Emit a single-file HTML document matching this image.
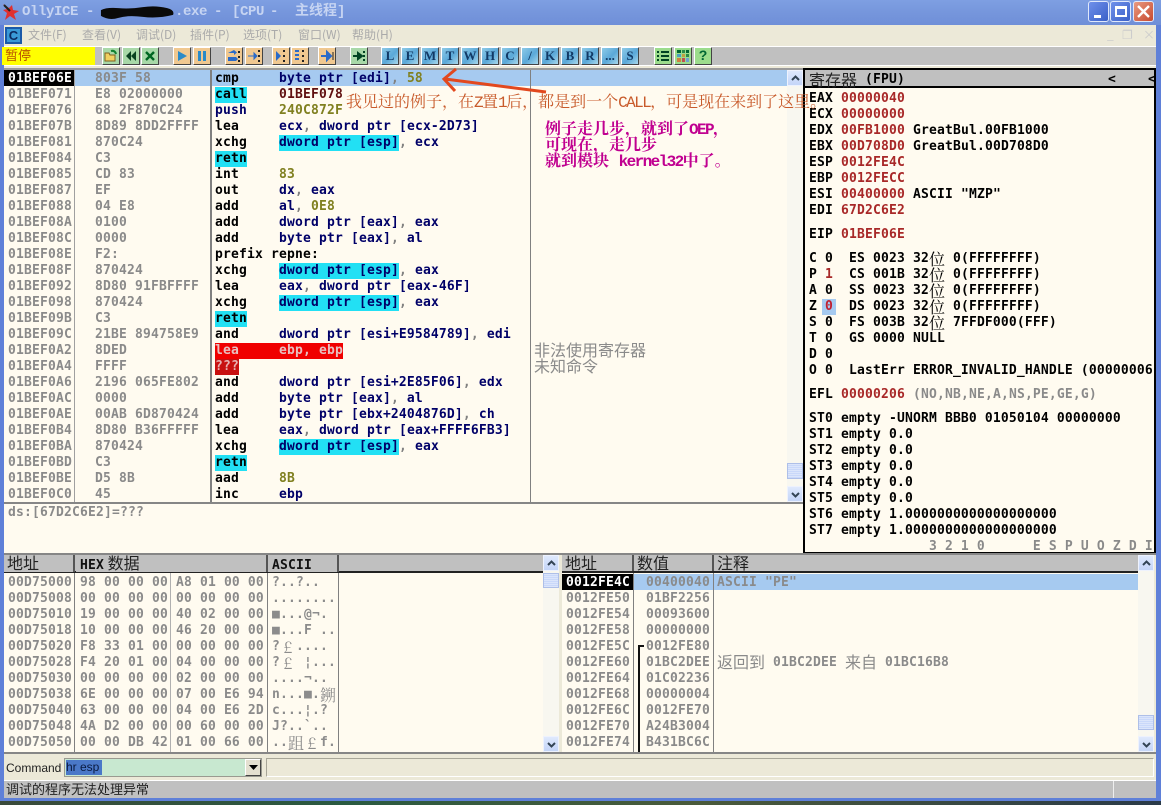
<!DOCTYPE html>
<html lang="zh"><head><meta charset="utf-8"><title>OllyICE</title>
<style>
html,body{margin:0;padding:0;width:1161px;height:805px;overflow:hidden;background:#ece9d8}
div{position:absolute;box-sizing:border-box}
pre{position:absolute;margin:0;font:bold 13px/16px "DejaVu Sans Mono","Noto Sans CJK SC",monospace;letter-spacing:.17px;color:#000;white-space:pre}
.g{color:#8a8a8a}.n{color:#000068}.o{color:#808020}.m{color:#601010}.r{color:#a82828}
i{font-style:normal;color:#808080}
.cy{background:#22e0f4;display:inline-block;height:16px;vertical-align:top}
.c{display:inline-block;width:16px;height:16px;line-height:16px;vertical-align:top;font:400 16px/16px "Noto Serif CJK SC",serif;letter-spacing:0;text-align:center}
.s{font-family:"Noto Sans CJK SC",sans-serif;position:relative;top:-2px}
.hd{background:#c0c0c0;height:17px;font:400 16px/15px "Noto Sans CJK SC",sans-serif;color:#222;white-space:pre;border-right:2px solid #555;padding-left:3px}
.hd span{font:bold 13px/16px "DejaVu Sans Mono",monospace;letter-spacing:.17px;color:#111;margin-left:1px}
.bt{width:18px;height:18px;top:47px;border:1px solid;border-color:#fff #444 #444 #fff;text-align:center;font:bold 13px/15px "Liberation Serif",serif;color:#123a66;overflow:hidden}
.l{background:linear-gradient(135deg,#8ecbe8,#5aa8d8 55%,#a8d8ec)}
.a{background:#f0c890}.e{background:#a8d8a8}
.bt svg{position:absolute;left:0;top:0;width:16px;height:16px}
.sb{background:#f8f7f0}
.sbb{left:0;width:100%;height:16px;background:linear-gradient(#dfe9fd,#c4d5f8);border:1px solid #eef2fd;color:#3a5a9a}
.sbb svg{position:absolute;left:3px;top:4px;width:9px;height:7px}
.th{left:0;width:100%;background:repeating-linear-gradient(#dbe5fb 0 1px,#c9d8fa 1px 2px);border:1px solid #aebfe8}
.mn{font:400 12px/20px "Noto Sans CJK SC",sans-serif;color:#aaa;top:25px;white-space:pre}
.t{top:1px;font:bold 14px/22px "Liberation Mono","Noto Sans CJK SC",monospace;letter-spacing:-.4px;color:#c6d4f2;white-space:pre}
.wb{top:1px;width:21px;height:21px;border:1px solid #dfe8fb;border-radius:3px}
.lt{letter-spacing:-1.6px}
</style></head><body>

<div style="left:0;top:0;width:1161px;height:25px;background:linear-gradient(#7e9fe2,#7696dc 50%,#6f8fd8)"></div>
<svg style="position:absolute;left:2px;top:2px" width="18" height="20" viewBox="0 0 18 20"><path d="M1 2 L7 6 L10 3 L11 8 L17 9 L12 12 L14 18 L8 14 L3 18 L5 11 L1 8 L5 7Z" fill="#e03030"/><path d="M2 3 L8 9" stroke="#222" stroke-width="2"/></svg>
<div class="t" style="left:22px">OllyICE</div>
<div class="t" style="left:86px">-</div>
<svg style="position:absolute;left:99px;top:6px" width="76" height="13" viewBox="0 0 78 13"><path d="M2 4 Q8 1 20 2 T45 1 T70 2 Q78 4 76 9 Q60 13 45 11 T20 12 T2 10Z" fill="#0a0a0a"/></svg>
<div class="t" style="left:175px">.exe</div>
<div class="t" style="left:214px">-</div>
<div class="t" style="left:232px">[CPU</div>
<div class="t" style="left:270px">-</div>
<div class="t" style="left:295px;letter-spacing:0">主线程]</div>
<div class="wb" style="left:1088px;background:linear-gradient(135deg,#6f90ea,#3a60c8)"><div style="left:5px;top:13px;width:7px;height:3px;background:#fff"></div></div>
<div class="wb" style="left:1110px;background:linear-gradient(135deg,#6f90ea,#3a60c8)"><div style="left:4px;top:4px;width:12px;height:11px;border:2px solid #fff;border-top-width:3px"></div></div>
<div class="wb" style="left:1133px;background:linear-gradient(135deg,#e89a80,#c84a30)"><svg style="position:absolute;left:3px;top:3px" width="13" height="13"><path d="M1 1 L12 12 M12 1 L1 12" stroke="#fff" stroke-width="2.4"/></svg></div>

<div style="left:0;top:25px;width:4px;height:776px;background:#5f80d8"></div>
<div style="left:1156px;top:25px;width:5px;height:776px;background:#5f80d8"></div>

<div style="left:5px;top:27px;width:17px;height:17px;background:#3a9ad8;border:2px solid #1a5aa8;color:#0c2a60;font:bold 13px/13px 'Liberation Sans',sans-serif;text-align:center">C</div>
<div class="mn" style="left:28px">文件(F)</div><div class="mn" style="left:82px">查看(V)</div><div class="mn" style="left:136px">调试(D)</div><div class="mn" style="left:190px">插件(P)</div><div class="mn" style="left:243px">选项(T)</div><div class="mn" style="left:298px">窗口(W)</div><div class="mn" style="left:352px">帮助(H)</div>
<div class="mn" style="left:1107px;color:#ccc">_</div><div class="mn" style="left:1122px;color:#ccc">❐</div><div class="mn" style="left:1143px;color:#ccc">×</div>

<div style="left:4px;top:46px;width:1152px;height:20px;background:#c0c0c0;border-top:1px solid #fff;border-bottom:1px solid #fff"></div>
<div style="left:2px;top:47px;width:93px;height:18px;background:#ffff00;font:400 13px/16px 'Noto Sans CJK SC',sans-serif;color:#b85000;padding-left:3px">暂停</div>

<div class="bt e" style="left:102px"><svg viewBox="0 0 16 16"><path d="M2 13V5h4l1 2h5v6Z" fill="#f0d060" stroke="#806020"/><path d="M8 3q4-1 5 3" stroke="#108030" fill="none" stroke-width="2"/></svg></div>
<div class="bt e" style="left:122px"><svg viewBox="0 0 16 16"><path d="M8 3v10L3 8ZM13 3v10L8 8Z" fill="#084020"/></svg></div>
<div class="bt e" style="left:141px"><svg viewBox="0 0 16 16"><path d="M4 4l8 8M12 4l-8 8" stroke="#062" stroke-width="2.4"/></svg></div>
<div class="bt a" style="left:173px"><svg viewBox="0 0 16 16"><path d="M4 3l9 5-9 5Z" fill="#2a8ac8"/></svg></div>
<div class="bt a" style="left:193px"><svg viewBox="0 0 16 16"><path d="M4 3h3v10H4ZM9 3h3v10H9Z" fill="#2a8ac8"/></svg></div>
<div class="bt a" style="left:225px"><svg viewBox="0 0 16 16"><path d="M2 5h6v2l3-2.500-3-2.500M2 9h8l2 2-2 2H2Z" fill="#2a6ac8"/><path d="M13 3v2M13 8v2M13 12v2" stroke="#222" stroke-width="2"/></svg></div>
<div class="bt a" style="left:245px"><svg viewBox="0 0 16 16"><path d="M2 8h6V5l3 3-3 3V8" fill="#2a6ac8" stroke="#2a6ac8"/><path d="M13 2v2M13 7v2M13 12v2" stroke="#222" stroke-width="2"/></svg></div>
<div class="bt a" style="left:272px"><svg viewBox="0 0 16 16"><path d="M3 3l5 5-5 5Z" fill="#2a6ac8"/><path d="M11 2v2M11 7v2M11 12v2" stroke="#222" stroke-width="2"/></svg></div>
<div class="bt a" style="left:291px"><svg viewBox="0 0 16 16"><path d="M3 3h4M3 7h4M3 11h4" stroke="#2a6ac8" stroke-width="2"/><path d="M11 2v2M11 7v2M11 12v2" stroke="#222" stroke-width="2"/></svg></div>
<div class="bt a" style="left:318px"><svg viewBox="0 0 16 16"><path d="M2 8h6M8 4l4 4-4 4Z" fill="#2a6ac8" stroke="#2a6ac8" stroke-width="2"/><path d="M14 4v8" stroke="#222"/></svg></div>
<div class="bt e" style="left:350px"><svg viewBox="0 0 16 16"><path d="M2 8h5M7 5l4 3-4 3Z" fill="#042" stroke="#042" stroke-width="2"/><path d="M13 3v2M13 7v2M13 11v2" stroke="#042" stroke-width="2"/></svg></div>

<div class="bt l" style="left:381px">L</div><div class="bt l" style="left:401px">E</div><div class="bt l" style="left:421px">M</div><div class="bt l" style="left:441px">T</div><div class="bt l" style="left:461px">W</div><div class="bt l" style="left:481px">H</div><div class="bt l" style="left:501px">C</div><div class="bt l" style="left:521px">/</div><div class="bt l" style="left:541px">K</div><div class="bt l" style="left:561px">B</div><div class="bt l" style="left:581px">R</div><div class="bt l" style="left:601px">...</div><div class="bt l" style="left:621px">S</div>
<div class="bt e" style="left:654px;background:#9cdc8c"><svg viewBox="0 0 16 16"><path d="M2 3h2v2H2ZM2 7h2v2H2ZM2 11h2v2H2ZM6 3h8v2H6ZM6 7h8v2H6ZM6 11h8v2H6Z" fill="#042"/></svg></div>
<div class="bt e" style="left:674px;background:#9cdc8c"><svg viewBox="0 0 16 16"><path d="M2 2h4v3H2Z" fill="#063"/><path d="M7 2h3v3H7Z" fill="#2a8a4a"/><path d="M11 2h3v3h-3Z" fill="#063"/><path d="M2 6h4v3H2Z" fill="#4aa0c0"/><path d="M7 6h3v3H7Z" fill="#c0a040"/><path d="M11 6h3v3h-3Z" fill="#2a8a4a"/><path d="M2 10h4v4H2Z" fill="#d08040"/><path d="M7 10h3v4H7Z" fill="#c05050"/><path d="M11 10h3v4h-3Z" fill="#70a0d0"/></svg></div>
<div class="bt e" style="left:694px;background:#9cdc8c;color:#063;font:bold 14px/15px 'Liberation Sans',sans-serif">?</div>

<!-- disassembly -->
<div style="left:4px;top:68px;width:799px;height:436px;background:#fffbf0;border-top:2px solid #9a9a9a;border-bottom:2px solid #868686"></div>
<div style="left:74px;top:70px;width:713px;height:16px;background:#a6caf0"></div>
<div style="left:4px;top:70px;width:70px;height:16px;background:#000"></div>
<div style="left:74px;top:70px;width:1px;height:432px;background:#a0a0a0"></div>
<div style="left:210px;top:70px;width:2px;height:432px;background:#808080"></div>
<div style="left:530px;top:70px;width:1px;height:432px;background:#808080"></div>
<pre class="g" style="left:8px;top:71px"><span style="color:#fff">01BEF06E</span>
01BEF071
01BEF076
01BEF07B
01BEF081
01BEF084
01BEF085
01BEF087
01BEF088
01BEF08A
01BEF08C
01BEF08E
01BEF08F
01BEF092
01BEF098
01BEF09B
01BEF09C
01BEF0A2
01BEF0A4
01BEF0A6
01BEF0AC
01BEF0AE
01BEF0B4
01BEF0BA
01BEF0BD
01BEF0BE
01BEF0C0</pre>
<pre class="g" style="left:95px;top:71px">803F 58
E8 02000000
68 2F870C24
8D89 8DD2FFFF
870C24
C3
CD 83
EF
04 E8
0100
0000
F2:
870424
8D80 91FBFFFF
870424
C3
21BE 894758E9
8DED
FFFF
2196 065FE802
0000
00AB 6D870424
8D80 B36FFFFF
870424
C3
D5 8B
45</pre>
<pre class="n" style="left:215px;top:71px"><span style="color:#000">cmp</span>     byte ptr [edi]<i>,</i> <span class="o">58</span>
<span class="cy" style="color:#000">call</span>    <span class="m">01BEF078</span>
push    <span class="o">240C872F</span>
<span style="color:#000">lea</span>     ecx<i>,</i> dword ptr [ecx-2D73]
<span style="color:#000">xchg</span>    <span class="cy">dword ptr [esp]</span><i>,</i> ecx
<span class="cy" style="color:#000">retn</span>
<span style="color:#000">int</span>     <span class="o">83</span>
<span style="color:#000">out</span>     dx<i>,</i> eax
<span style="color:#000">add</span>     al<i>,</i> <span class="o">0E8</span>
<span style="color:#000">add</span>     dword ptr [eax]<i>,</i> eax
<span style="color:#000">add</span>     byte ptr [eax]<i>,</i> al
<span style="color:#000">prefix repne:</span>
<span style="color:#000">xchg</span>    <span class="cy">dword ptr [esp]</span><i>,</i> eax
<span style="color:#000">lea</span>     eax<i>,</i> dword ptr [eax-46F]
<span style="color:#000">xchg</span>    <span class="cy">dword ptr [esp]</span><i>,</i> eax
<span class="cy" style="color:#000">retn</span>
<span style="color:#000">and</span>     dword ptr [esi+E9584789]<i>,</i> edi
<span style="background:#f00000;color:#e8c0c0;display:inline-block;height:16px;vertical-align:top">lea     ebp, ebp</span>
<span style="background:#c81010;color:#e8b0b0;display:inline-block;height:16px;vertical-align:top">???</span>
<span style="color:#000">and</span>     dword ptr [esi+2E85F06]<i>,</i> edx
<span style="color:#000">add</span>     byte ptr [eax]<i>,</i> al
<span style="color:#000">add</span>     byte ptr [ebx+2404876D]<i>,</i> ch
<span style="color:#000">lea</span>     eax<i>,</i> dword ptr [eax+FFFF6FB3]
<span style="color:#000">xchg</span>    <span class="cy">dword ptr [esp]</span><i>,</i> eax
<span class="cy" style="color:#000">retn</span>
<span style="color:#000">aad</span>     <span class="o">8B</span>
<span style="color:#000">inc</span>     ebp</pre>
<div style="left:534px;top:341px;font:400 16px/16px 'Noto Sans CJK SC',sans-serif;color:#8a8a8a">非法使用寄存器<br>未知命令</div>

<div class="sb" style="left:787px;top:70px;width:16px;height:432px">
<div class="sbb" style="top:0"><svg viewBox="0 0 9 7"><path d="M1 5l3.500-3.500L8 5" fill="none" stroke="#345" stroke-width="2"/></svg></div>
<div class="th" style="top:393px;height:16px"></div>
<div class="sbb" style="top:416px"><svg viewBox="0 0 9 7"><path d="M1 2l3.500 3.500L8 2" fill="none" stroke="#345" stroke-width="2"/></svg></div></div>

<!-- info -->
<div style="left:4px;top:504px;width:800px;height:49px;background:#fffbf0"></div>
<pre class="g" style="left:8px;top:505px">ds:[67D2C6E2]=???</pre>

<!-- registers -->
<div style="left:803px;top:68px;width:353px;height:486px;background:#fffbf0;border:2px solid #000"></div>
<div style="left:805px;top:70px;width:349px;height:18px;background:#c0c0c0;border-bottom:2px solid #000"></div>
<div style="left:809px;top:70px;font:400 16px/18px 'Noto Sans CJK SC',sans-serif;color:#222">寄存器</div>
<pre style="left:865px;top:72px">(FPU)</pre><pre style="left:1108px;top:72px">&lt;</pre><pre style="left:1148px;top:72px">&lt;</pre>
<pre style="left:809px;top:91px">EAX <span class="r">00000040</span>
ECX <span class="r">00000000</span>
EDX <span class="r">00FB1000</span> GreatBul.00FB1000
EBX <span class="r">00D708D0</span> GreatBul.00D708D0
ESP <span class="r">0012FE4C</span>
EBP <span class="r">0012FECC</span>
ESI <span class="r">00400000</span> ASCII "MZP"
EDI <span class="r">67D2C6E2</span></pre>
<pre style="left:809px;top:227px">EIP <span class="r">01BEF06E</span></pre>
<pre style="left:809px;top:251px">C 0  ES 0023 32<span class="c">位</span> 0(FFFFFFFF)
P <span class="r">1</span>  CS 001B 32<span class="c">位</span> 0(FFFFFFFF)
A 0  SS 0023 32<span class="c">位</span> 0(FFFFFFFF)
Z <span style="background:#a6caf0;color:#c02030;display:inline-block;width:14px;text-align:center;margin:0 -3px;height:16px;vertical-align:top">0</span>  DS 0023 32<span class="c">位</span> 0(FFFFFFFF)
S 0  FS 003B 32<span class="c">位</span> 7FFDF000(FFF)
T 0  GS 0000 NULL
D 0
O 0  LastErr ERROR_INVALID_HANDLE (00000006</pre>
<pre style="left:809px;top:387px">EFL <span class="r">00000206</span> <span class="g">(NO,NB,NE,A,NS,PE,GE,G)</span></pre>
<pre style="left:809px;top:411px">ST0 empty -UNORM BBB0 01050104 00000000
ST1 empty 0.0
ST2 empty 0.0
ST3 empty 0.0
ST4 empty 0.0
ST5 empty 0.0
ST6 empty 1.0000000000000000000
ST7 empty 1.0000000000000000000
<span class="g">               3 2 1 0      E S P U O Z D I</span></pre>

<!-- dump -->
<div style="left:4px;top:553px;width:1152px;height:2px;background:#868686"></div>
<div style="left:4px;top:555px;width:539px;height:197px;background:#fffbf0"></div>
<div style="left:4px;top:555px;width:539px;height:18px;background:#c0c0c0;border-bottom:2px solid #222"></div>
<div class="hd" style="left:4px;top:555px;width:71px">地址</div>
<div class="hd" style="left:76px;top:555px;width:192px"><span>HEX</span> 数据</div>
<div class="hd" style="left:268px;top:555px;width:71px"><span>ASCII</span></div>
<div style="left:74px;top:573px;width:1px;height:179px;background:#808080"></div>
<div style="left:170px;top:573px;width:1px;height:179px;background:#b0b0b0"></div>
<div style="left:267px;top:573px;width:1px;height:179px;background:#808080"></div>
<div style="left:338px;top:573px;width:1px;height:179px;background:#808080"></div>
<pre class="g" style="left:8px;top:575px">00D75000
00D75008
00D75010
00D75018
00D75020
00D75028
00D75030
00D75038
00D75040
00D75048
00D75050</pre>
<pre class="g" style="left:80px;top:575px">98 00 00 00 A8 01 00 00
00 00 00 00 00 00 00 00
19 00 00 00 40 02 00 00
10 00 00 00 46 20 00 00
F8 33 01 00 00 00 00 00
F4 20 01 00 04 00 00 00
00 00 00 00 02 00 00 00
6E 00 00 00 07 00 E6 94
63 00 00 00 04 00 E6 2D
4A D2 00 00 00 60 00 00
00 00 DB 42 01 00 66 00</pre>
<pre class="g" style="left:272px;top:575px;color:#8c8c8c">?..?..
........
■...@¬.
■...F ..
?<span class="c">£</span>....
?<span class="c">£</span> ¦...
....¬..
n...■.<span class="c">鎙</span>
c...¦.?
J?..`..
..<span class="c">跙</span><span class="c">£</span>f.</pre>
<div class="sb" style="left:543px;top:555px;width:16px;height:197px">
<div class="sbb" style="top:0"><svg viewBox="0 0 9 7"><path d="M1 5l3.500-3.500L8 5" fill="none" stroke="#345" stroke-width="2"/></svg></div>
<div class="th" style="top:18px;height:15px"></div>
<div class="sbb" style="top:181px"><svg viewBox="0 0 9 7"><path d="M1 2l3.500 3.500L8 2" fill="none" stroke="#345" stroke-width="2"/></svg></div></div>

<!-- stack -->
<div style="left:559px;top:555px;width:3px;height:197px;background:#ece9d8"></div>
<div style="left:562px;top:555px;width:576px;height:197px;background:#fffbf0"></div>
<div class="hd" style="left:562px;top:555px;width:72px">地址</div>
<div class="hd" style="left:634px;top:555px;width:80px">数值</div>
<div class="hd" style="left:714px;top:555px;width:424px;border-right:0">注释</div>
<div style="left:562px;top:571px;width:576px;height:2px;background:#222"></div>
<div style="left:633px;top:574px;width:505px;height:16px;background:#a6caf0"></div>
<div style="left:562px;top:574px;width:71px;height:16px;background:#000"></div>
<div style="left:633px;top:573px;width:1px;height:179px;background:#808080"></div>
<div style="left:713px;top:573px;width:1px;height:179px;background:#808080"></div>
<pre class="g" style="left:566px;top:575px"><span style="color:#fff">0012FE4C</span>
0012FE50
0012FE54
0012FE58
0012FE5C
0012FE60
0012FE64
0012FE68
0012FE6C
0012FE70
0012FE74</pre>
<pre class="g" style="left:646px;top:575px">00400040
01BF2256
00093600
00000000
0012FE80
01BC2DEE
01C02236
00000004
0012FE70
A24B3004
B431BC6C</pre>
<svg style="position:absolute;left:636px;top:644px" width="10" height="108"><path d="M8 2H3V108" fill="none" stroke="#111" stroke-width="2"/></svg>
<pre class="g" style="left:717px;top:575px">ASCII "PE"</pre>
<pre class="g" style="left:717px;top:655px"><span class="c s">返</span><span class="c s">回</span><span class="c s">到</span> 01BC2DEE <span class="c s">来</span><span class="c s">自</span> 01BC16B8</pre>
<div class="sb" style="left:1138px;top:555px;width:16px;height:197px">
<div class="sbb" style="top:0"><svg viewBox="0 0 9 7"><path d="M1 5l3.500-3.500L8 5" fill="none" stroke="#345" stroke-width="2"/></svg></div>
<div class="th" style="top:160px;height:15px"></div>
<div class="sbb" style="top:181px"><svg viewBox="0 0 9 7"><path d="M1 2l3.500 3.500L8 2" fill="none" stroke="#345" stroke-width="2"/></svg></div></div>

<!-- command -->
<div style="left:4px;top:752px;width:1152px;height:2px;background:#868686"></div>
<div style="left:6px;top:760px;font:400 12px/16px 'Liberation Sans',sans-serif;color:#222">Command</div>
<div style="left:64px;top:758px;width:198px;height:19px;background:#c8e8d0;border:1px solid #9a9a90"></div>
<div style="left:66px;top:760px;width:36px;height:15px;background:#4a78c8;font:400 12px/15px 'Liberation Sans',sans-serif;color:#0a1a40">hr esp</div>
<div style="left:245px;top:759px;width:16px;height:17px;background:#e4e0d0;border:1px solid;border-color:#fff #444 #444 #fff"><svg style="position:absolute;left:3px;top:5px" width="9" height="5"><path d="M0 0h9L4.500 5Z" fill="#000"/></svg></div>
<div style="left:266px;top:758px;width:888px;height:19px;background:#ece9d8;border:1px solid;border-color:#a8a698 #fff #fff #a8a698"></div>

<!-- status -->
<div style="left:4px;top:780px;width:1152px;height:18px;background:#c0c0c0;border-top:1px solid #fff;font:400 13px/15px 'Noto Sans CJK SC',sans-serif;color:#222;padding-left:2px">调试的程序无法处理异常</div>
<div style="left:1113px;top:781px;width:1px;height:17px;background:#eee"></div>
<div style="left:0;top:798px;width:1161px;height:3px;background:#5f80d8"></div>
<div style="left:0;top:801px;width:1161px;height:4px;background:linear-gradient(90deg,#3a4a3a,#2a5a40 30%,#4a5a3a 60%,#2a3a48)"></div>

<!-- annotations -->
<svg style="position:absolute;left:438px;top:64px" width="115" height="36" viewBox="0 0 115 36"><path d="M108 28L7 15M18 5L6 15L17 27" fill="none" stroke="#e2481e" stroke-width="3"/></svg>
<pre style="left:346px;top:95px;font:400 16px/16px 'Liberation Mono','Noto Serif CJK SC',serif;letter-spacing:0;color:#c85a2a">我见过的例子，在<span class="lt">Z</span>置<span class="lt">1</span>后，都是到一个<span class="lt">CALL</span>，可是现在来到了这里。</pre>
<pre style="left:545px;top:122px;font:700 16px/16px 'Liberation Mono','Noto Serif CJK SC',serif;letter-spacing:0;color:#c00090">例子走几步，就到了<span class="lt">OEP</span>，
可现在，走几步
就到模块 <span class="lt">kernel32</span>中了。</pre>
</body></html>
